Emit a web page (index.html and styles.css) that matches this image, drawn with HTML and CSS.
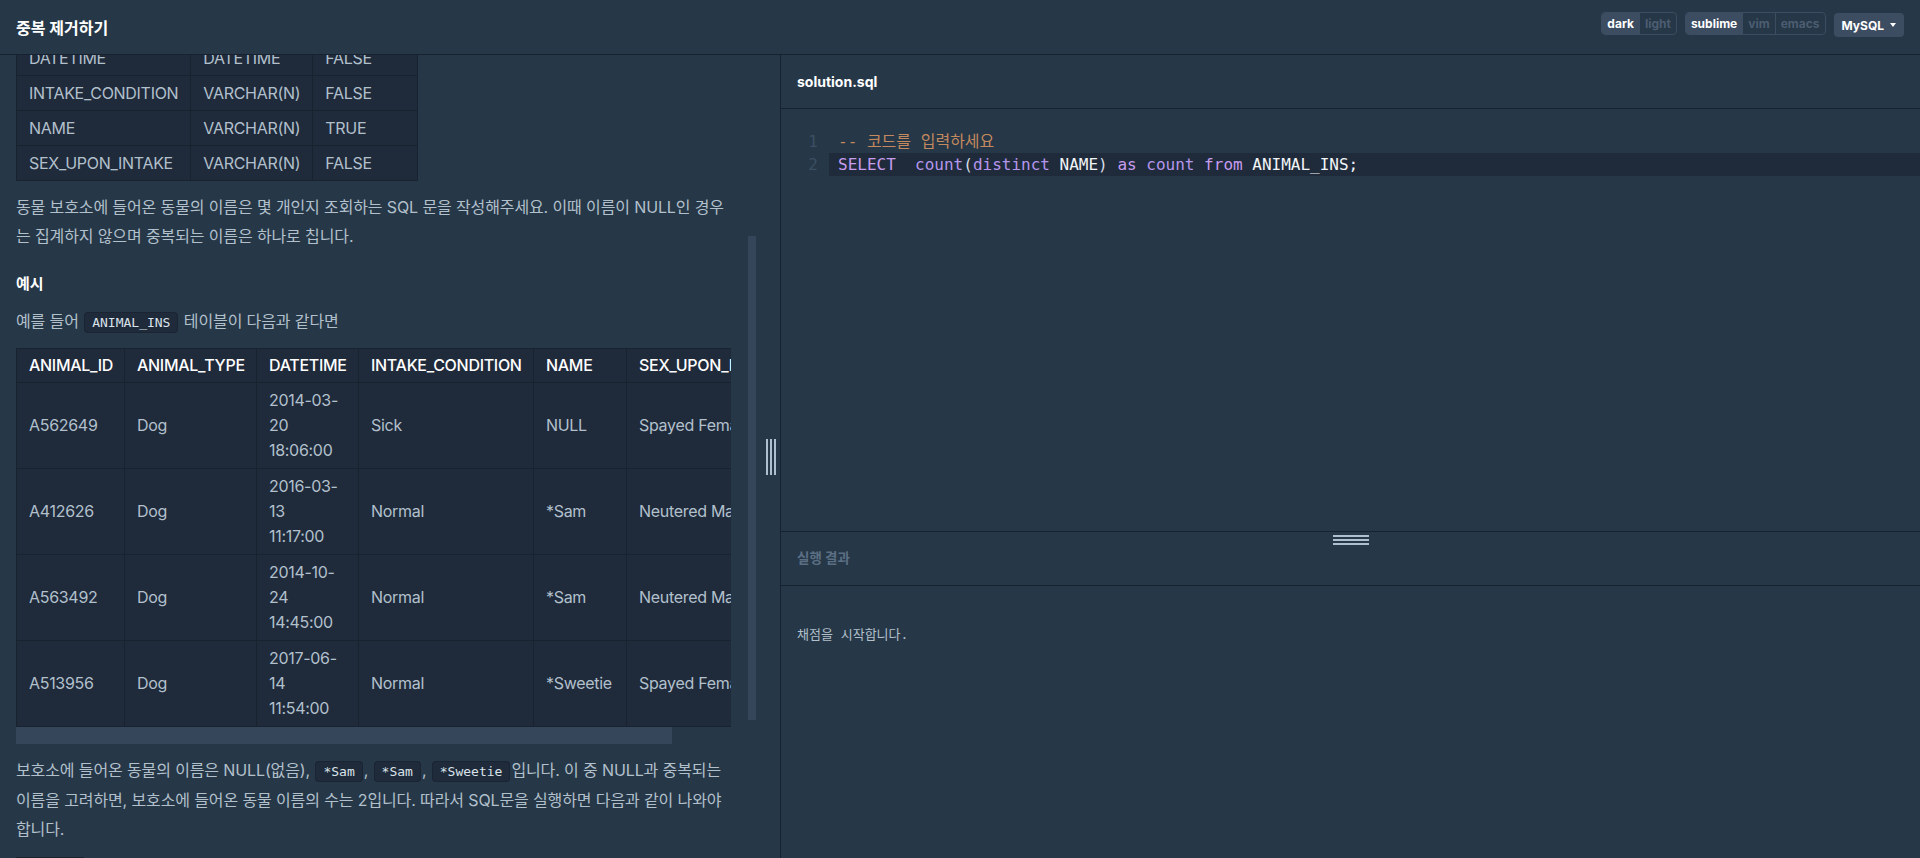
FILE: index.html
```html
<!DOCTYPE html>
<html lang="ko">
<head>
<meta charset="utf-8">
<title>중복 제거하기</title>
<link rel="stylesheet" href="styles.css">
</head>
<body>
<header class="topbar">
  <h1 class="title">중복 제거하기</h1>
  <div class="controls">
    <div class="seg"><span class="opt on">dark</span><span class="opt">light</span></div>
    <div class="seg seg-keys"><span class="opt on">sublime</span><span class="opt">vim</span><span class="opt">emacs</span></div>
    <div class="dd">MySQL<span class="caret"></span></div>
  </div>
</header>
<main class="main">
  <section class="left">
    <div class="desc" id="desc">
      <h6 class="sec-title">문제 설명</h6>
      <p class="para"><code>ANIMAL_INS</code> 테이블은 동물 보호소에 들어온 동물의 정보를 담은 테이블입니다. <code>ANIMAL_INS</code> 테이블 구조는 다음과 같으며, <code>ANIMAL_ID</code>, <code>ANIMAL_TYPE</code>, <code>DATETIME</code>, <code>INTAKE_CONDITION</code>, <code>NAME</code>, <code>SEX_UPON_INTAKE</code>는 각각 동물의 아이디, 생물 종, 보호 시작일, 보호 시작 시 상태, 이름, 성별 및 중성화 여부를 나타냅니다.</p>
      <table class="tbl schema">
        <thead><tr><th>NAME</th><th>TYPE</th><th>NULLABLE</th></tr></thead>
        <tbody>
          <tr><td>ANIMAL_ID</td><td>VARCHAR(N)</td><td>FALSE</td></tr>
          <tr><td>ANIMAL_TYPE</td><td>VARCHAR(N)</td><td>FALSE</td></tr>
          <tr id="anchor"><td>DATETIME</td><td>DATETIME</td><td>FALSE</td></tr>
          <tr><td>INTAKE_CONDITION</td><td>VARCHAR(N)</td><td>FALSE</td></tr>
          <tr><td>NAME</td><td>VARCHAR(N)</td><td>TRUE</td></tr>
          <tr><td>SEX_UPON_INTAKE</td><td>VARCHAR(N)</td><td>FALSE</td></tr>
        </tbody>
      </table>
      <p class="para p1">동물 보호소에 들어온 동물의 이름은 몇 개인지 조회하는 SQL 문을 작성해주세요. 이때 이름이 NULL인 경우는 집계하지 않으며 중복되는 이름은 하나로 칩니다.</p>
      <h5 class="ex-title">예시</h5>
      <p class="para p-lead">예를 들어 <code>ANIMAL_INS</code> 테이블이 다음과 같다면</p>
      <div class="tscroll">
        <table class="tbl example">
          <colgroup>
            <col class="c-id"><col class="c-type"><col class="c-dt"><col class="c-cond"><col class="c-name"><col class="c-sex">
          </colgroup>
          <thead><tr><th>ANIMAL_ID</th><th>ANIMAL_TYPE</th><th>DATETIME</th><th>INTAKE_CONDITION</th><th>NAME</th><th>SEX_UPON_INTAKE</th></tr></thead>
          <tbody>
            <tr><td>A562649</td><td>Dog</td><td>2014-03-20<br>18:06:00</td><td>Sick</td><td>NULL</td><td>Spayed Female</td></tr>
            <tr><td>A412626</td><td>Dog</td><td>2016-03-13<br>11:17:00</td><td>Normal</td><td>*Sam</td><td>Neutered Male</td></tr>
            <tr><td>A563492</td><td>Dog</td><td>2014-10-24<br>14:45:00</td><td>Normal</td><td>*Sam</td><td>Neutered Male</td></tr>
            <tr><td>A513956</td><td>Dog</td><td>2017-06-14<br>11:54:00</td><td>Normal</td><td>*Sweetie</td><td>Spayed Female</td></tr>
          </tbody>
        </table>
      </div>
      <div class="hbar"><div class="hthumb"></div></div>
      <p class="para p-after">보호소에 들어온 동물의 이름은 NULL(없음), <code>*Sam</code>, <code>*Sam</code>, <code>*Sweetie</code>입니다. 이 중 NULL과 중복되는 이름을 고려하면, 보호소에 들어온 동물 이름의 수는 2입니다. 따라서 SQL문을 실행하면 다음과 같이 나와야 합니다.</p>
      <table class="tbl result">
        <thead><tr><th>count</th></tr></thead>
        <tbody><tr><td>2</td></tr></tbody>
      </table>
      <p class="para">※ 컬럼 이름은 일치하지 않아도 됩니다.</p>
    </div>
    <div class="vthumb"></div>
  </section>
  <div class="gutter"><span class="bars-v"><i></i><i></i><i></i></span></div>
  <section class="right">
    <div class="tab">solution.sql</div>
    <div class="editor">
      <div class="cline"><span class="ln">1</span><span class="src"><span class="c-cm">-- 코드를 입력하세요</span></span></div>
      <div class="cline active"><span class="ln">2</span><span class="src"><span class="c-kw">SELECT</span>  <span class="c-fn">count</span><span class="c-pn">(</span><span class="c-fn">distinct</span> <span class="c-idf">NAME</span><span class="c-pn">)</span> <span class="c-kw">as</span> <span class="c-fn">count</span> <span class="c-kw">from</span> <span class="c-idf">ANIMAL_INS;</span></span></div>
    </div>
    <div class="result-head">
      <span class="bars-h"><i></i><i></i><i></i></span>
      <span class="result-title">실행 결과</span>
    </div>
    <div class="result-body">채점을 시작합니다.</div>
  </section>
</main>
<script src="script.js"></script>
</body>
</html>
```

FILE: styles.css
```css
* { box-sizing: border-box; }
html, body { margin: 0; height: 100%; }
body {
  background: #263747;
  font-family: Inter, "Noto Sans CJK KR", sans-serif;
  color: #b2c0cc;
  overflow: hidden;
}
.topbar {
  height: 55px;
  border-bottom: 1px solid #172130;
  display: flex;
  justify-content: space-between;
  align-items: center;
  padding: 0 16px;
}
.title {
  margin: 0;
  font-size: 16px;
  font-weight: 700;
  color: #fff;
}
.controls {
  align-self: flex-start;
  margin-top: 12px;
  display: flex;
  align-items: flex-start;
  gap: 8px;
}
.seg {
  display: flex;
  height: 23px;
  border: 1px solid #3c4c61;
  border-radius: 4px;
  overflow: hidden;
}
.opt {
  display: flex;
  align-items: center;
  padding: 0 5px;
  font-size: 12px;
  font-weight: 700;
  color: #4c5d71;
}
.opt + .opt { border-left: 1px solid #3c4c61; }
.opt.on { background: #3c4c61; color: #fff; }
.dd {
  margin-top: 1px;
  height: 24px;
  display: flex;
  align-items: center;
  padding: 0 8px;
  background: #3c4c61;
  border-radius: 4px;
  font-size: 12px;
  font-weight: 700;
  color: #fff;
}
.caret {
  margin-left: 6px;
  width: 0; height: 0;
  border-left: 3.5px solid transparent;
  border-right: 3.5px solid transparent;
  border-top: 4px solid #fff;
}
.main {
  display: flex;
  height: calc(100% - 55px);
}
.left {
  width: 760px;
  position: relative;
  flex: none;
}
.desc {
  height: 100%;
  overflow: hidden;
  padding: 0 29px 40px 16px;
  font-size: 16px;
  line-height: 28.8px;
}
.sec-title { margin: 20px 0 10px; font-size: 16px; color: #fff; }
.para { margin: 0 0 19px; letter-spacing: -0.12px; }
code {
  font-family: "DejaVu Sans Mono", "Noto Sans CJK KR", monospace;
  font-size: 13px;
  letter-spacing: 0;
  color: #dbe3ea;
  background: #1f2a3a;
  border: 1px solid #1b2433;
  border-radius: 4px;
  padding: 2px 7px;
  margin: 0 1px;
}
.tbl {
  border-collapse: collapse;
  background: #1f2a3b;
  line-height: 25px;
  letter-spacing: -0.3px;
}
.tbl th, .tbl td {
  border: 1px solid #19222f;
  text-align: left;
  padding: 4px 12px;
  vertical-align: middle;
}
.tbl th { color: #fff; font-weight: 500; }
.schema { margin-bottom: 12px; }
.schema td { padding: 5px 12px 4px; }
.p1 { margin-bottom: 19px; }
.ex-title {
  margin: 0 0 9px;
  font-size: 15px;
  font-weight: 700;
  color: #fff;
  line-height: 28.8px;
}
.p-lead { margin-bottom: 10px; }
.tscroll { width: 100%; overflow: hidden; }
.example { table-layout: fixed; width: 779px; }
.example th, .example td { white-space: normal; overflow: hidden; }
.example td { padding: 5px 12px; }
.c-id { width: 108px; }
.c-type { width: 132px; }
.c-dt { width: 102px; }
.c-cond { width: 175px; }
.c-name { width: 93px; }
.c-sex { width: 169px; }
.hbar { height: 17px; }
.hthumb { width: 656px; height: 100%; background: #36465a; }
.p-after { margin: 11.5px 0 13px; }
.result { margin-bottom: 19px; }
.vthumb {
  position: absolute;
  left: 748px;
  top: 181px;
  width: 8px;
  height: 484px;
  background: #35455a;
}
.gutter {
  width: 20px;
  flex: none;
  display: flex;
  align-items: center;
  justify-content: center;
  padding-left: 2px;
}
.bars-v { display: flex; gap: 2px; height: 36px; }
.bars-v i { display: block; width: 2px; height: 100%; background: #aebfd0; }
.right {
  flex: 1;
  display: flex;
  flex-direction: column;
  border-left: 1px solid #172130;
  min-width: 0;
}
.tab {
  height: 54px;
  flex: none;
  border-bottom: 1px solid #172130;
  display: flex;
  align-items: center;
  padding-left: 16px;
  font-size: 14px;
  font-weight: 700;
  color: #fff;
}
.editor {
  height: 423px;
  flex: none;
  border-bottom: 1px solid #172130;
  padding-top: 21px;
  font-family: "DejaVu Sans Mono", "Noto Sans CJK KR", monospace;
  font-size: 16px;
  line-height: 23px;
}
.cline { display: flex; }
.ln {
  width: 48px;
  flex: none;
  text-align: right;
  padding-right: 11px;
  color: #3b4e62;
}
.src {
  flex: 1;
  padding-left: 9px;
  white-space: pre;
  color: #e6edf3;
}
.cline.active .src { background: #1f2b3a; }
.c-cm { color: #c4895e; }
.c-kw { color: #c79df0; }
.c-fn { color: #b596ec; }
.c-pn { color: #d6dde6; }
.c-idf { color: #f2f5f8; }
.result-head {
  position: relative;
  height: 54px;
  flex: none;
  border-bottom: 1px solid #172130;
  display: flex;
  align-items: center;
  padding: 0 0 4px 16px;
}
.bars-h {
  position: absolute;
  top: 3px;
  left: 50%;
  transform: translateX(-50%);
  display: flex;
  flex-direction: column;
  gap: 2px;
}
.bars-h i { display: block; width: 36px; height: 2px; background: #aebfd0; }
.result-title {
  font-size: 13.5px;
  font-weight: 700;
  color: #5b6f84;
}
.result-body {
  padding: 39px 16px 0;
  font-family: "DejaVu Sans Mono", "Noto Sans CJK KR", monospace;
  font-size: 13px;
  line-height: 20px;
  color: #b2c0cc;
  white-space: pre;
}
```

FILE: script.js
```js
(function () {
  var d = document.getElementById('desc');
  var a = document.getElementById('anchor');
  if (d && a) {
    d.scrollTop = Math.round(a.getBoundingClientRect().bottom - d.getBoundingClientRect().top - 20);
  }
})();
```
